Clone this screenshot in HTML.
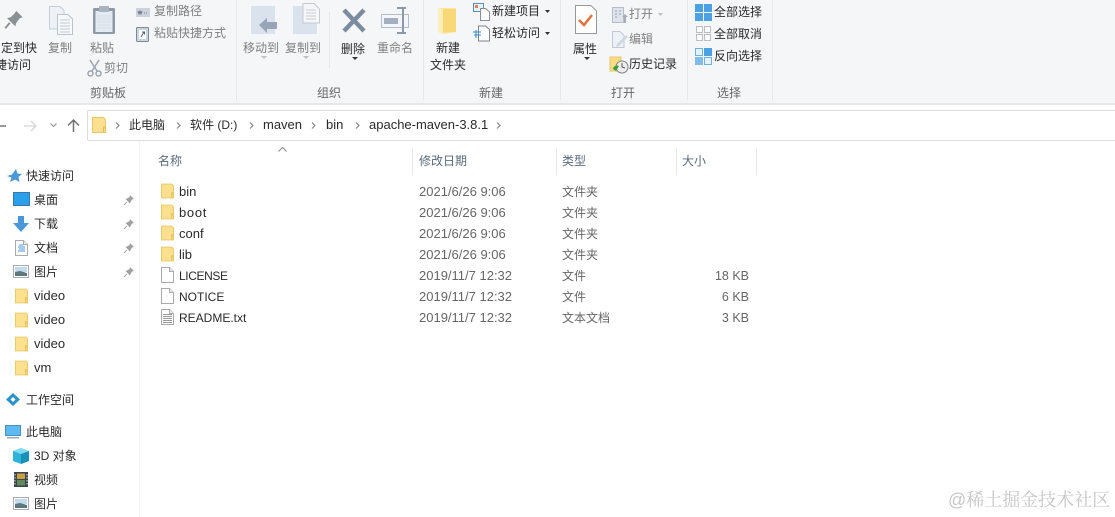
<!DOCTYPE html>
<html><head><meta charset="utf-8"><style>
html,body{margin:0;padding:0;background:#fff}
#p{position:relative;width:1115px;height:517px;overflow:hidden;background:#fff;font-family:"Liberation Sans","Noto Sans CJK SC",sans-serif;font-size:12px;color:#333;filter:blur(.3px)}
.t{position:absolute;white-space:nowrap;line-height:16px;height:16px}
.l{font-size:13px}
.g{color:#808080}.d{color:#666}.k{color:#2a2a2a}
.a{position:absolute}
svg{position:absolute;overflow:visible}
</style></head><body><div id="p">
<svg width="0" height="0" style="position:absolute"><defs>
<symbol id="f" viewBox="0 0 14 16"><path d="M.5.5H11.500L13.500 2.500V15.500H.5Z" fill="#fce08f" stroke="#e9c766"/><path d="M11.500 15V10H13.500" fill="#f5cf68" stroke="#e2bb5a"/></symbol>
<symbol id="pin" viewBox="0 0 12 12"><path d="M7 1L11 5L9 5.500L7.500 8L7 9.500L2.500 5L4 4.500L6.500 3Z" fill="#a0a0a0"/><path d="M4 8L1 11" stroke="#aaa" fill="none"/></symbol>
<symbol id="img" viewBox="0 0 16 13"><rect x=".5" y=".5" width="15" height="12" fill="#fff" stroke="#a5abb1"/><rect x="2" y="2" width="12" height="5" fill="#c3dbef"/><path d="M2 7L7 6L14 8V11H2Z" fill="#5c787b"/></symbol>
<symbol id="doc" viewBox="0 0 13 16"><path d="M.5.5H8.500L12.500 4.500V15.500H.5Z" fill="#fff" stroke="#ababab"/><path d="M8.500.5V4.500H12.500" fill="#eee" stroke="#ababab"/></symbol>
</defs></svg>

<!-- ribbon -->
<div class="a" style="left:0;top:0;width:1115px;height:103px;background:#f5f6f7"></div>
<div class="a" style="left:0;top:103px;width:1115px;height:2px;background:#e6e7e8"></div>
<div class="a" style="left:236px;top:0;width:1px;height:100px;background:#e6e7e8"></div>
<div class="a" style="left:423px;top:0;width:1px;height:100px;background:#e6e7e8"></div>
<div class="a" style="left:560px;top:0;width:1px;height:100px;background:#e6e7e8"></div>
<div class="a" style="left:687px;top:0;width:1px;height:100px;background:#e6e7e8"></div>
<div class="a" style="left:772px;top:0;width:1px;height:100px;background:#e6e7e8"></div>
<div class="a" style="left:329px;top:12px;width:1px;height:56px;background:#e6e7e8"></div>

<!-- clipboard group icons -->
<svg style="left:3px;top:9px" width="21" height="22" viewBox="0 0 22 24"><path d="M14 2L21 9L18 10L14 15L13 19L4 10L8 9L12 5Z" fill="#8b9095"/><path d="M7 15L2 21" stroke="#8b9095" stroke-width="2"/></svg>
<svg style="left:48px;top:5px" width="26" height="30" viewBox="0 0 26 30"><path d="M1.500 1.500H12L16 5.500V24H1.500Z" fill="#eef2f6" stroke="#c3ccd8"/><path d="M9.500 9.500H20L24.500 14V29.500H9.500Z" fill="#f6f8fa" stroke="#bac3d0"/><path d="M12 15H22M12 18H22M12 21H22M12 24H22M12 27H22" stroke="#c3cad5"/></svg>
<svg style="left:92px;top:5px" width="24" height="30" viewBox="0 0 24 30"><rect x="1" y="3" width="22" height="26" rx="1.500" fill="#8d99a8"/><rect x="3.500" y="6" width="17" height="21" fill="#e3eaf2"/><rect x="7" y="1" width="10" height="6" fill="#aab4c0"/><path d="M5 11H19M5 14H19M5 17H19M5 20H19M5 23H19" stroke="#d5dde7"/></svg>
<svg style="left:87px;top:59px" width="15" height="18" viewBox="0 0 15 18"><path d="M3 1L10 12M12 1L5 12" stroke="#9aa4b1" stroke-width="1.500" fill="none"/><circle cx="3.500" cy="14.500" r="2.500" fill="none" stroke="#9aa4b1" stroke-width="1.500"/><circle cx="11.500" cy="14.500" r="2.500" fill="none" stroke="#9aa4b1" stroke-width="1.500"/></svg>
<svg style="left:136px;top:8px" width="14" height="9" viewBox="0 0 14 9"><rect width="14" height="9" fill="#ccd3dc"/><path d="M2 3L3 6L4 3L5 6L6 3M8 5H9M10 5H11" stroke="#5b6675" fill="none" stroke-width=".8"/></svg>
<svg style="left:136px;top:26px" width="13" height="16" viewBox="0 0 13 16"><rect x=".5" y="1.500" width="12" height="14" rx="1" fill="#cbd5e0" stroke="#7c8b9c"/><rect x="3" y="4" width="7" height="9" fill="#fff"/><path d="M5 11L8 6M6 6H8.500V8.500" stroke="#4e6073" fill="none"/></svg>

<div class="t k" style="left:1px;top:40px">定到快</div>
<div class="t k" style="left:-5px;top:57px">捷访问</div>
<div class="t g" style="left:48px;top:40px">复制</div>
<div class="t g" style="left:90px;top:40px">粘贴</div>
<div class="t g" style="left:104px;top:60px">剪切</div>
<div class="t g" style="left:154px;top:3px">复制路径</div>
<div class="t g" style="left:154px;top:25px">粘贴快捷方式</div>
<div class="t d" style="left:90px;top:85px">剪贴板</div>

<!-- organize -->
<svg style="left:250px;top:6px" width="28" height="30" viewBox="0 0 28 30"><rect x="1" y="0" width="24" height="28" fill="#d9e2ed"/><path d="M9 19L17 12V16H27V23H17V27Z" fill="#98a5b6"/></svg>
<svg style="left:292px;top:3px" width="28" height="32" viewBox="0 0 28 32"><rect x="1" y="3" width="24" height="28" fill="#d9e2ed"/><path d="M11 .5H22L27.500 6V20H11Z" fill="#f5f6f8" stroke="#c3cad3"/><path d="M14 7H24M14 10H24M14 13H24M14 16H24" stroke="#c6ccd4"/></svg>
<svg style="left:342px;top:8px" width="24" height="25" viewBox="0 0 24 25"><path d="M2 2L22 23M22 2L2 23" stroke="#7c8ca0" stroke-width="4.500"/></svg>
<svg style="left:381px;top:7px" width="30" height="27" viewBox="0 0 30 27"><rect x=".5" y="7.500" width="27" height="13" fill="#f3f5f8" stroke="#b2bdcb"/><rect x="3" y="11" width="14" height="6" fill="#a3b0c2"/><path d="M19 1H22V26H19M25 1H22M25 26H22M19 1H16M19 26H16" stroke="#8a99ac" stroke-width="2" fill="none"/></svg>
<div class="t g" style="left:243px;top:40px">移动到</div>
<div class="t g" style="left:285px;top:40px">复制到</div>
<div class="t k" style="left:341px;top:41px">删除</div>
<div class="t g" style="left:377px;top:40px">重命名</div>
<svg style="left:261px;top:56px" width="6" height="3"><path d="M0 0H6L3 3Z" fill="#c0c0c0"/></svg>
<svg style="left:303px;top:56px" width="6" height="3"><path d="M0 0H6L3 3Z" fill="#c0c0c0"/></svg>
<svg style="left:352px;top:57px" width="6" height="3"><path d="M0 0H6L3 3Z" fill="#333"/></svg>
<div class="t d" style="left:317px;top:85px">组织</div>

<!-- new -->
<svg style="left:438px;top:8px" width="18" height="26" viewBox="0 0 18 26"><path d="M0 0H18V24L6 26L0 24Z" fill="#fbe49e"/><path d="M5 1H18V24H5Z" fill="#f9d878"/><path d="M0 0L5 1V25L0 24Z" fill="#fdeebc"/></svg>
<svg style="left:473px;top:3px" width="18" height="18" viewBox="0 0 18 18"><rect x=".5" y=".5" width="10" height="8" fill="#e8f1fa" stroke="#5a8cbd"/><rect x="2" y="2" width="3" height="3" fill="#d9825a"/><path d="M7.500 5.500H12.500L16.500 9V17.500H7.500Z" fill="#fff" stroke="#868f99"/></svg>
<svg style="left:473px;top:25px" width="18" height="17" viewBox="0 0 18 17"><path d="M5.500 1H12.500L16.500 4.500V16H5.500Z" fill="#fff" stroke="#7a838d"/><path d="M0 7H8M1 10H8M3 5V13" stroke="#2f8ccf" fill="none"/></svg>
<div class="t k" style="left:436px;top:40px">新建</div>
<div class="t k" style="left:430px;top:57px">文件夹</div>
<div class="t k" style="left:492px;top:3px">新建项目</div>
<div class="t k" style="left:492px;top:25px">轻松访问</div>
<svg style="left:545px;top:10px" width="5" height="3"><path d="M0 0H5L2.500 3Z" fill="#333"/></svg>
<svg style="left:545px;top:32px" width="5" height="3"><path d="M0 0H5L2.500 3Z" fill="#333"/></svg>
<div class="t d" style="left:479px;top:85px">新建</div>

<!-- open -->
<svg style="left:575px;top:5px" width="22" height="29" viewBox="0 0 22 29"><path d="M.5.5H16L21.500 6V28.500H.5Z" fill="#fff" stroke="#999"/><path d="M4 15L9 20L17 10" stroke="#e2703c" stroke-width="2.500" fill="none"/></svg>
<div class="t k" style="left:573px;top:41px">属性</div>
<svg style="left:584px;top:57px" width="6" height="3"><path d="M0 0H6L3 3Z" fill="#333"/></svg>
<svg style="left:612px;top:7px" width="16" height="17" viewBox="0 0 16 17"><rect x=".5" y=".5" width="11" height="15" fill="#dfe4ea" stroke="#b5bdc8"/><path d="M3 4H5M7 4H9M3 7H5M7 7H9M3 10H5" stroke="#98a2af"/><path d="M10 10L13 7L16 10H14V16H12V10Z" fill="#a3adb9"/></svg>
<svg style="left:612px;top:31px" width="17" height="17" viewBox="0 0 17 17"><path d="M.5.500H8L12 4.500V16.500H.5Z" fill="#eef1f5" stroke="#c3cad3"/><path d="M5 13L14 4L16 6L7 15L4 16Z" fill="#ced7e2"/></svg>
<svg style="left:610px;top:57px" width="20" height="17" viewBox="0 0 20 17"><rect x="0" y="0" width="11" height="14" fill="#fbdc80" stroke="#e5c572"/><circle cx="12" cy="10" r="6" fill="#eee" stroke="#808080"/><path d="M12 6V10L15 11" stroke="#555" fill="none"/><path d="M3 12A4 4 0 0 1 9 9L6 14Z" fill="#3aa03a"/></svg>
<div class="t g" style="left:629px;top:6px">打开</div>
<svg style="left:658px;top:13px" width="5" height="3"><path d="M0 0H5L2.500 3Z" fill="#c0c0c0"/></svg>
<div class="t g" style="left:629px;top:31px">编辑</div>
<div class="t k" style="left:629px;top:56px">历史记录</div>
<div class="t d" style="left:611px;top:85px">打开</div>

<!-- select -->
<svg style="left:695px;top:4px" width="17" height="17" viewBox="0 0 17 17"><path d="M0 0H8V8H0ZM9 0H17V8H9ZM0 9H8V17H0ZM9 9H17V17H9Z" fill="#4ba1e2"/></svg>
<svg style="left:696px;top:26px" width="15" height="15" viewBox="0 0 15 15"><path d="M.5.500H6.500V6.500H.5ZM8.500.500H14.500V6.500H8.500ZM.5 8.500H6.500V14.500H.5ZM8.500 8.500H14.500V14.500H8.500Z" fill="#fff" stroke="#bdbdbd"/></svg>
<svg style="left:695px;top:48px" width="17" height="17" viewBox="0 0 17 17"><path d="M.5.500H7.500V7.500H.5ZM9.500 9.500H16.500V16.500H9.500Z" fill="#e6f0f9" stroke="#6db0e4"/><rect x="9" y="0" width="8" height="8" fill="#4ba1e2"/><rect x="0" y="9" width="8" height="8" fill="#82bdea"/></svg>
<div class="t k" style="left:714px;top:4px">全部选择</div>
<div class="t k" style="left:714px;top:26px">全部取消</div>
<div class="t k" style="left:714px;top:48px">反向选择</div>
<div class="t d" style="left:717px;top:85px">选择</div>

<!-- nav -->
<div class="a" style="left:0;top:125px;width:6px;height:1.500px;background:#999"></div>
<svg style="left:24px;top:120px" width="13" height="12" viewBox="0 0 13 12"><path d="M0 6H12M7 1L12 6L7 11" stroke="#d6d6d6" stroke-width="1.300" fill="none"/></svg>
<svg style="left:50px;top:123px" width="7" height="5" viewBox="0 0 7 5"><path d="M.5.500L3.500 3.500L6.500.5" stroke="#999" stroke-width="1.200" fill="none"/></svg>
<svg style="left:67px;top:119px" width="13" height="13" viewBox="0 0 13 13"><path d="M6.500 13V1M1 6.500L6.500 1L12 6.500" stroke="#707070" stroke-width="1.500" fill="none"/></svg>
<div class="a" style="left:87px;top:110px;width:1028px;height:29px;border:1px solid #dcdcdc;border-right:0;border-radius:2px 0 0 2px;box-sizing:content-box"></div>
<svg style="left:92px;top:117px" width="14" height="16"><use href="#f" width="14" height="16"/></svg>
<svg style="left:115px;top:122px" width="5" height="7" viewBox="0 0 5 7"><path d="M1 .5L4 3.500L1 6.500" stroke="#888" stroke-width="1.200" fill="none"/></svg>
<svg style="left:176px;top:122px" width="5" height="7" viewBox="0 0 5 7"><path d="M1 .5L4 3.500L1 6.500" stroke="#888" stroke-width="1.200" fill="none"/></svg>
<svg style="left:249px;top:122px" width="5" height="7" viewBox="0 0 5 7"><path d="M1 .5L4 3.500L1 6.500" stroke="#888" stroke-width="1.200" fill="none"/></svg>
<svg style="left:311px;top:122px" width="5" height="7" viewBox="0 0 5 7"><path d="M1 .5L4 3.500L1 6.500" stroke="#888" stroke-width="1.200" fill="none"/></svg>
<svg style="left:355px;top:122px" width="5" height="7" viewBox="0 0 5 7"><path d="M1 .5L4 3.500L1 6.500" stroke="#888" stroke-width="1.200" fill="none"/></svg>
<svg style="left:496px;top:122px" width="5" height="7" viewBox="0 0 5 7"><path d="M1 .5L4 3.500L1 6.500" stroke="#888" stroke-width="1.200" fill="none"/></svg>
<div class="t k" style="left:129px;top:117px">此电脑</div>
<div class="t k" style="left:190px;top:117px">软件 (D:)</div>
<div class="t k l" style="left:263px;top:117px">maven</div>
<div class="t k l" style="left:326px;top:117px">bin</div>
<div class="t k l" style="left:369px;top:117px">apache-maven-3.8.1</div>

<!-- sidebar -->
<div class="a" style="left:139px;top:141px;width:1px;height:376px;background:#f2f2f2"></div>
<svg style="left:7px;top:169px" width="15" height="14" viewBox="0 0 15 14"><path d="M9 0L10.500 4.500L15 5L11.500 8L12.500 13L8 10.500L3 13L4.500 8.500L0 7L5 5.500Z" fill="#4a97da"/></svg>
<div class="t k" style="left:26px;top:168px">快速访问</div>
<svg style="left:13px;top:192px" width="17" height="14" viewBox="0 0 17 14"><rect x=".5" y=".5" width="16" height="13" fill="#2aa0ea" stroke="#3a78ab"/></svg>
<div class="t k" style="left:34px;top:192px">桌面</div>
<svg style="left:13px;top:216px" width="16" height="16" viewBox="0 0 16 16"><path d="M5 0H11V7H16L8 16L0 7H5Z" fill="#4a97da"/></svg>
<div class="t k" style="left:34px;top:216px">下载</div>
<svg style="left:15px;top:240px" width="13" height="16"><use href="#doc" width="13" height="16"/></svg>
<svg style="left:18px;top:244px" width="8" height="9" viewBox="0 0 8 9"><path d="M1 1H5M0 3H7M1 5H7M0 7H7" stroke="#4a97da"/></svg>
<div class="t k" style="left:34px;top:240px">文档</div>
<svg style="left:13px;top:265px" width="16" height="13"><use href="#img" width="16" height="13"/></svg>
<div class="t k" style="left:34px;top:264px">图片</div>
<svg style="left:123px;top:194px" width="12" height="12"><use href="#pin" width="12" height="12"/></svg>
<svg style="left:123px;top:218px" width="12" height="12"><use href="#pin" width="12" height="12"/></svg>
<svg style="left:123px;top:242px" width="12" height="12"><use href="#pin" width="12" height="12"/></svg>
<svg style="left:123px;top:266px" width="12" height="12"><use href="#pin" width="12" height="12"/></svg>
<svg style="left:15px;top:288px" width="13" height="16"><use href="#f" width="13" height="16"/></svg>
<svg style="left:15px;top:312px" width="13" height="16"><use href="#f" width="13" height="16"/></svg>
<svg style="left:15px;top:336px" width="13" height="16"><use href="#f" width="13" height="16"/></svg>
<svg style="left:15px;top:360px" width="13" height="16"><use href="#f" width="13" height="16"/></svg>
<div class="t k l" style="left:34px;top:288px">video</div>
<div class="t k l" style="left:34px;top:312px">video</div>
<div class="t k l" style="left:34px;top:336px">video</div>
<div class="t k l" style="left:34px;top:360px">vm</div>
<svg style="left:6px;top:393px" width="14" height="13" viewBox="0 0 14 13"><path d="M7 0L14 6.500L7 13L0 6.500Z" fill="#2a93c9"/><path d="M7 4L9.500 6.500L7 9L4.500 6.500Z" fill="#fff"/></svg>
<div class="t k" style="left:26px;top:392px">工作空间</div>
<svg style="left:5px;top:425px" width="16" height="14" viewBox="0 0 16 14"><rect x=".5" y=".5" width="15" height="10" fill="#5cbaf0" stroke="#4a8fc0"/><rect x="2" y="12" width="12" height="1.500" fill="#9ab"/></svg>
<div class="t k" style="left:26px;top:424px">此电脑</div>
<svg style="left:13px;top:448px" width="16" height="16" viewBox="0 0 16 16"><path d="M8 0L16 3V13L8 16L0 13V3Z" fill="#2db4d8"/><path d="M8 6L16 3V13L8 16Z" fill="#1a8fb8"/><path d="M0 3L8 0L16 3L8 6Z" fill="#7fdcf0"/></svg>
<div class="t k" style="left:34px;top:448px">3D 对象</div>
<svg style="left:14px;top:472px" width="14" height="15" viewBox="0 0 14 15"><rect width="14" height="15" fill="#3c4450"/><rect x="3" y="1.500" width="8" height="5.500" fill="#c9a23e"/><rect x="3" y="8" width="8" height="5.500" fill="#5f8a5a"/><path d="M1 2V13M13 2V13" stroke="#ddd" stroke-dasharray="1.500 1.500"/></svg>
<div class="t k" style="left:34px;top:472px">视频</div>
<svg style="left:13px;top:497px" width="16" height="13"><use href="#img" width="16" height="13"/></svg>
<div class="t k" style="left:34px;top:496px">图片</div>

<!-- headers -->
<svg style="left:278px;top:147px" width="9" height="5" viewBox="0 0 9 5"><path d="M.5 4.500L4.500.5L8.500 4.500" stroke="#888" fill="none"/></svg>
<div class="t" style="left:158px;top:153px;color:#5a6b7d">名称</div>
<div class="t" style="left:419px;top:153px;color:#5a6b7d">修改日期</div>
<div class="t" style="left:562px;top:153px;color:#5a6b7d">类型</div>
<div class="t" style="left:682px;top:153px;color:#5a6b7d">大小</div>
<div class="a" style="left:412px;top:148px;width:1px;height:27px;background:#e8e8e8"></div>
<div class="a" style="left:556px;top:148px;width:1px;height:27px;background:#e8e8e8"></div>
<div class="a" style="left:676px;top:148px;width:1px;height:27px;background:#e8e8e8"></div>
<div class="a" style="left:756px;top:148px;width:1px;height:27px;background:#e8e8e8"></div>

<!-- rows -->
<svg style="left:161px;top:183px" width="13" height="16"><use href="#f" width="13" height="16"/></svg>
<svg style="left:161px;top:204px" width="13" height="16"><use href="#f" width="13" height="16"/></svg>
<svg style="left:161px;top:225px" width="13" height="16"><use href="#f" width="13" height="16"/></svg>
<svg style="left:161px;top:246px" width="13" height="16"><use href="#f" width="13" height="16"/></svg>
<svg style="left:161px;top:267px" width="13" height="16"><use href="#doc" width="13" height="16"/></svg>
<svg style="left:161px;top:288px" width="13" height="16"><use href="#doc" width="13" height="16"/></svg>
<svg style="left:161px;top:309px" width="13" height="16"><use href="#doc" width="13" height="16"/></svg>
<svg style="left:163px;top:314px" width="9" height="9" viewBox="0 0 9 9"><path d="M0 .5H9M0 2.500H9M0 4.500H9M0 6.500H9M0 8.500H9" stroke="#999"/></svg>

<div class="t k l" style="left:179px;top:184px">bin</div>
<div class="t k l" style="left:179px;top:205px;letter-spacing:.7px">boot</div>
<div class="t k l" style="left:179px;top:226px">conf</div>
<div class="t k l" style="left:179px;top:247px">lib</div>
<div class="t k" style="left:179px;top:268px;letter-spacing:-.4px">LICENSE</div>
<div class="t k" style="left:179px;top:289px">NOTICE</div>
<div class="t k" style="left:179px;top:310px">README.txt</div>

<div class="t d l" style="left:419px;top:184px">2021/6/26 9:06</div>
<div class="t d l" style="left:419px;top:205px">2021/6/26 9:06</div>
<div class="t d l" style="left:419px;top:226px">2021/6/26 9:06</div>
<div class="t d l" style="left:419px;top:247px">2021/6/26 9:06</div>
<div class="t d l" style="left:419px;top:268px">2019/11/7 12:32</div>
<div class="t d l" style="left:419px;top:289px">2019/11/7 12:32</div>
<div class="t d l" style="left:419px;top:310px">2019/11/7 12:32</div>

<div class="t d" style="left:562px;top:184px">文件夹</div>
<div class="t d" style="left:562px;top:205px">文件夹</div>
<div class="t d" style="left:562px;top:226px">文件夹</div>
<div class="t d" style="left:562px;top:247px">文件夹</div>
<div class="t d" style="left:562px;top:268px">文件</div>
<div class="t d" style="left:562px;top:289px">文件</div>
<div class="t d" style="left:562px;top:310px">文本文档</div>

<div class="t d" style="right:366px;top:268px;font-size:12.500px">18 KB</div>
<div class="t d" style="right:366px;top:289px;font-size:12.500px">6 KB</div>
<div class="t d" style="right:366px;top:310px;font-size:12.500px">3 KB</div>

<!-- watermark -->
<div class="t" style="left:948px;top:491px;height:18px;line-height:18px;font-size:18px;color:#c6c6c6;font-family:'Liberation Sans','Noto Serif CJK SC',serif">@稀土掘金技术社区</div>
</div></body></html>
